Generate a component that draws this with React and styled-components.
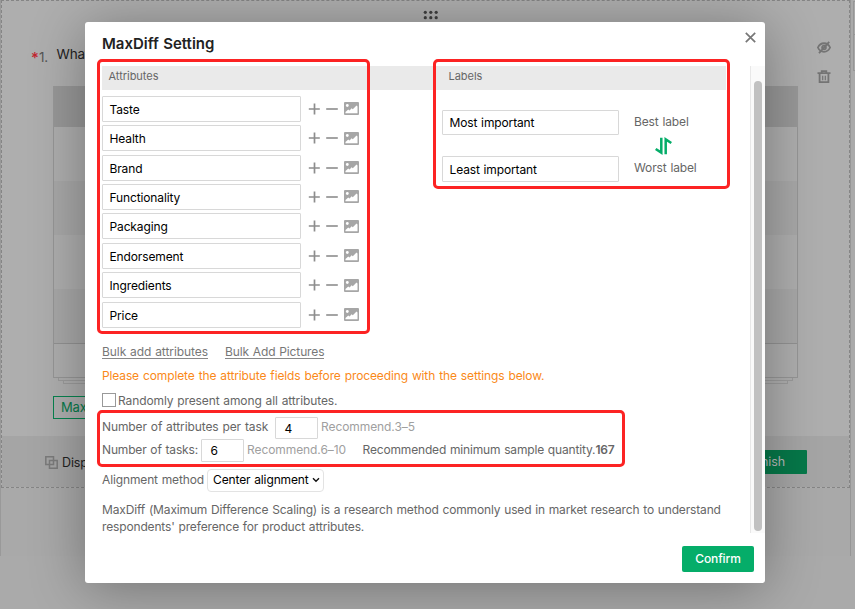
import React from 'react';
import styled, { createGlobalStyle } from 'styled-components';

const Global = createGlobalStyle`
  * { box-sizing: border-box; }
  body { margin: 0; background: #aaa; overflow: hidden; }
  svg { display: block; }
`;

const Page = styled.div`
  width: 855px;
  height: 609px;
  overflow: hidden;
  position: relative;
  background: #aaa;
  font-family: Inter, "Liberation Sans", sans-serif;
  font-size: 12px;
  letter-spacing: -0.13px;
  word-spacing: 0.6px;
  white-space: nowrap;
  color: #666;
`;
const Columns = styled.div`
  display: flex;
  height: 556px;
`;
const Editor = styled.div`
  width: 851px;
  border-left: 1px solid #999;
  border-right: 1px solid #969696;
  background: #a9a9a9;
`;
const SidePanel = styled.div`
  flex: 1;
  padding: 1px 0 0 2px;
`;
const SideTab = styled.div`
  height: ${(p) => p.$h}px;
  border: 1px solid #969696;
  border-right: 0;
  border-top-width: ${(p) => (p.$first ? 1 : 0)}px;
`;
const Question = styled.div`
  height: 488px;
  border: 1px dashed #858585;
  display: flex;
  flex-direction: column;
  background: #aeaeae;
`;
const Handle = styled.div`
  height: 50px;
  padding: 9px 0 0 421px;
`;
const Heading = styled.div`
  height: 35px;
  display: flex;
  align-items: flex-start;
  justify-content: space-between;
  margin-top: -12px;
  padding: 0 18px 0 29px;
`;
const QuestionTitle = styled.div`
  display: flex;
  font-size: 13.5px;
  line-height: 18px;
  padding-top: 6px;
  color: #222;
`;
const Star = styled.span`
  width: 8px;
  padding-top: 4px;
  color: #c3242f;
  font-size: 15px;
  font-weight: 500;
`;
const Num = styled.span`
  width: 17.5px;
  padding-top: 3px;
  color: #555;
`;
const Tools = styled.div`
  display: grid;
  gap: 16px;
  padding-top: 2px;
`;
const Table = styled.div`
  width: 745px;
  height: 292px;
  margin: 12px 0 0 51px;
  border: 1px solid #969696;
  border-top: 0;
`;
const TableRow = styled.div`
  height: ${(p) => p.$h}px;
  margin: ${(p) => (p.$head ? '0 -1px' : '0')};
  background: ${(p) => p.$bg};
  border-top: ${(p) => (p.$line ? '1px solid #929292' : '0')};
`;
const Sheet = styled.div`
  height: 3px;
  margin: 0 ${(p) => p.$inset}px 0 ${(p) => p.$inset}px;
  border: 1px solid #9b9b9b;
  border-top: 0;
`;
const Tag = styled.div`
  width: 90px;
  height: 23px;
  margin: 12px 0 0 51px;
  padding-left: 7px;
  border: 1px solid #07834f;
  line-height: 21px;
  font-size: 13px;
  color: #087a4b;
`;
const Footer = styled.div`
  margin-top: auto;
  height: 51px;
  background: #a5a5a5;
  display: flex;
  align-items: center;
  justify-content: space-between;
  padding: 1px 42px 0 43px;
`;
const Display = styled.div`
  display: flex;
  align-items: center;
  gap: 4px;
  font-size: 12.5px;
  color: #222;
`;
const Finish = styled.div`
  width: 76px;
  height: 24px;
  border-radius: 1px;
  line-height: 24px;
  padding-right: 22px;
  text-align: right;
  font-size: 12.5px;
  color: #b9b9b9;
  background: #067849;
`;

const Modal = styled.div`
  position: absolute;
  left: 85px;
  top: 22px;
  width: 680px;
  height: 561px;
  border-radius: 3px;
  background: #fff;
  box-shadow: 0 5px 55px rgba(0, 0, 0, 0.33);
`;
const ModalHead = styled.div`
  height: 44px;
  display: flex;
  justify-content: space-between;
  padding: 10px 9px 0 17px;
`;
const Title = styled.div`
  font-size: 15px;
  font-weight: 570;
  line-height: 24px;
  letter-spacing: 0;
  color: #222;
`;
const ModalBody = styled.div`
  height: 467px;
  display: flex;
  justify-content: space-between;
  padding-left: 17px;
`;
const Content = styled.div`
  width: 624px;
`;
const Track = styled.div`
  width: 15px;
  height: 467px;
  padding: 15px 3px 2px;
  background: #fafafa;
  border-left: 1px solid #e8e8e8;
`;
const Thumb = styled.div`
  height: 450px;
  width: 8px;
  border-radius: 4px;
  background: #c1c1c1;
`;
const Band = styled.div`
  height: 24px;
  background: #eaeaea;
  display: grid;
  grid-template-columns: 340px 1fr;
  padding-left: 6.5px;
  font-size: 11px;
  line-height: 21px;
  letter-spacing: -0.03px;
`;
const Panels = styled.div`
  display: grid;
  grid-template-columns: 340px 1fr;
  padding-top: 5.7px;
  height: 252px;
`;
const AttrRow = styled.div`
  height: 29.43px;
  display: flex;
  align-items: flex-start;
`;
const Field = styled.div`
  width: ${(p) => p.$w}px;
  height: ${(p) => p.$h || 26}px;
  line-height: ${(p) => (p.$h || 26) - 1}px;
  padding-left: ${(p) => p.$pad || 6.5}px;
  border: 1px solid #d8d8d8;
  border-radius: 1px;
  background: #fff;
  color: #000;
`;
const Actions = styled.div`
  display: flex;
  align-items: center;
  gap: 6px;
  height: 26px;
  padding-left: 7px;
`;
const LabelPanel = styled.div`
  padding-top: 14.3px;
`;
const LabelRow = styled.div`
  display: flex;
  gap: 15px;
  line-height: 23px;
`;
const SwapRow = styled.div`
  height: 21px;
  padding: 2px 0 0 213px;
`;
const Links = styled.div`
  display: flex;
  gap: 17px;
  height: 24px;
  line-height: 20px;
  color: #777;
`;
const LinkText = styled.span`
  height: 17px;
  border-bottom: 1px solid #888;
  letter-spacing: ${(p) => p.$ls}px;
`;
const Warning = styled.div`
  height: 24px;
  line-height: 20px;
  color: #fa8919;
  letter-spacing: -0.13px;
  word-spacing: 0.8px;
`;
const Line = styled.div`
  display: flex;
  align-items: center;
  height: ${(p) => p.$h}px;
  margin-bottom: ${(p) => p.$after || 0}px;
  letter-spacing: ${(p) => p.$ls ?? -0.13}px;
`;
const Box = styled.div`
  width: 14px;
  height: 14px;
  margin-right: 2px;
  border: 1px solid #999;
`;
const Caption = styled.span`
  width: ${(p) => (p.$w ? `${p.$w}px` : 'auto')};
  padding-bottom: 3px;
`;
const Hint = styled(Caption)`
  padding-left: 3px;
  color: #a0a0a0;
  letter-spacing: -0.08px;
`;
const Strong = styled.b`
  font-weight: 600;
`;
const Select = styled.div`
  display: flex;
  align-items: center;
  justify-content: space-between;
  width: 117px;
  height: 23px;
  padding: 0 3px 2px 5px;
  border: 1px solid #e3e3e3;
  border-radius: 4px;
  color: #000;
`;
const Note = styled.p`
  margin: 2px 0 0;
  line-height: 17px;
  letter-spacing: -0.15px;
`;
const ModalFoot = styled.div`
  display: flex;
  justify-content: flex-end;
  padding: 13px 11px 0 0;
`;
const Confirm = styled.div`
  width: 72px;
  height: 26px;
  border-radius: 2px;
  line-height: 26px;
  text-align: center;
  font-weight: 500;
  color: #fff;
  background: #05ad69;
`;
const Highlight = styled.div`
  position: absolute;
  left: ${(p) => p.$x}px;
  top: ${(p) => p.$y}px;
  width: ${(p) => p.$w}px;
  height: ${(p) => p.$h}px;
  border: 3px solid #fc2323;
  border-radius: 5px;
`;

const Plus = () => (
  <svg width="12" height="12" viewBox="0 0 12 12" stroke="#8d8d8d" strokeWidth="1.7"><path d="M.8 6h11M6.5 .5v11" /></svg>
);
const Minus = () => (
  <svg width="12" height="12" viewBox="0 0 12 12" stroke="#8d8d8d" strokeWidth="1.6"><path d="M.2 6h11.6" /></svg>
);
const Picture = () => (
  <svg width="15" height="13" viewBox="0 0 15 13">
    <rect width="15" height="13" rx="1" fill="#a6a6a6" />
    <circle cx="3.3" cy="3.5" r="1.4" fill="#fff" />
    <path d="M1.5 11.3V10L4.2 7.4 5.6 8.4 7.6 6.3 8.8 7.2 12.5 3.6 13.5 4.4V11.3Z" fill="#fff" />
  </svg>
);
const Swap = () => (
  <svg width="17" height="18" viewBox="0 0 17 18" fill="none" stroke="#05ad69" strokeWidth="2.5">
    <path d="M6.3.8V15.6L.7 12M10.7 17.2V2.4L16.3 6" />
  </svg>
);
const Dots = () => (
  <svg width="16" height="10" viewBox="0 0 16 10" fill="#3f3f3f">
    {[2.3, 7.8, 13.2].map((x) => [2.3, 7.7].map((y) => <circle key={`${x}-${y}`} cx={x} cy={y} r="1.6" />))}
  </svg>
);
const EyeOff = () => (
  <svg width="14" height="13" viewBox="0 0 14 13" fill="none" stroke="#747474" strokeWidth="1.8">
    <path d="M.9 6.5C3.5.8 10.5.8 13.1 6.5 10.5 12.2 3.5 12.2.9 6.5Z" />
    <circle cx="7" cy="6.5" r="1.9" />
    <path d="M12.2.8 2 12.2" />
  </svg>
);
const Trash = () => (
  <svg width="14" height="14" viewBox="0 0 14 14" fill="none" stroke="#747474" strokeWidth="1.8">
    <path d="M.5 3.2h13M4.7 3V1.1h4.6V3M2.6 3.5v8.7h8.8V3.5" />
    <path d="M5.7 5.8v4.4M8.3 5.8v4.4" strokeWidth="1.2" />
  </svg>
);
const Copy = () => (
  <svg width="13" height="13" viewBox="0 0 13 13" fill="none" stroke="#7b7b7b" strokeWidth="1.5">
    <path d="M.8.8h7.7v7.7H.8zM4.5 4.5h7.7v7.7H4.5z" />
  </svg>
);
const Close = () => (
  <svg width="11" height="11" viewBox="0 0 11 11" stroke="#777" strokeWidth="1.7"><path d="M.8.8 10.2 10.2M10.2.8.8 10.2" /></svg>
);
const Chevron = () => (
  <svg width="8" height="6" viewBox="0 0 8 6" fill="none" stroke="#111" strokeWidth="1.4"><path d="M1 1.3 4 4.3 7 1.3" /></svg>
);

const attributes = ['Taste', 'Health', 'Brand', 'Functionality', 'Packaging', 'Endorsement', 'Ingredients', 'Price'];

export default function App() {
  return (
    <Page>
      <Global />
      <Columns>
        <Editor>
          <Question>
            <Handle><Dots /></Handle>
            <Heading>
              <QuestionTitle><Star>*</Star><Num>1.</Num>What</QuestionTitle>
              <Tools><EyeOff /><Trash /></Tools>
            </Heading>
            <Table>
              <TableRow $h={41} $bg="#989898" $head />
              <TableRow $h={54} $bg="#aeaeae" />
              <TableRow $h={54} $bg="#a8a8a8" />
              <TableRow $h={54} $bg="#aeaeae" />
              <TableRow $h={54} $bg="#a8a8a8" />
              <TableRow $h={34} $bg="#aeaeae" $line />
            </Table>
            <Sheet $inset={56} />
            <Sheet $inset={61} />
            <Tag>MaxDiff</Tag>
            <Footer>
              <Display><Copy />Display</Display>
              <Finish>Finish</Finish>
            </Footer>
          </Question>
        </Editor>
        <SidePanel>
          <SideTab $h={34} $first />
          <SideTab $h={36} />
        </SidePanel>
      </Columns>

      <Modal>
        <ModalHead>
          <Title>MaxDiff Setting</Title>
          <Close />
        </ModalHead>
        <ModalBody>
          <Content>
            <Band><span>Attributes</span><span>Labels</span></Band>
            <Panels>
              <div>
                {attributes.map((name) => (
                  <AttrRow key={name}>
                    <Field $w={199}>{name}</Field>
                    <Actions><Plus /><Minus /><Picture /></Actions>
                  </AttrRow>
                ))}
              </div>
              <LabelPanel>
                <LabelRow><Field $w={177} $h={25}>Most important</Field>Best label</LabelRow>
                <SwapRow><Swap /></SwapRow>
                <LabelRow><Field $w={177}>Least important</Field>Worst label</LabelRow>
              </LabelPanel>
            </Panels>
            <Links>
              <LinkText $ls={-0.07}>Bulk add attributes</LinkText>
              <LinkText $ls={-0.12}>Bulk Add Pictures</LinkText>
            </Links>
            <Warning>Please complete the attribute fields before proceeding with the settings below.</Warning>
            <Line $h={20} $after={7} $ls={-0.11}><Box />Randomly present among all attributes.</Line>
            <Line $h={22} $ls={-0.1}>
              <Caption $w={173}>Number of attributes per task</Caption>
              <Field $w={43} $h={22} $pad={8.5}>4</Field>
              <Hint>Recommend.3–5</Hint>
            </Line>
            <Line $h={23} $ls={-0.16}>
              <Caption $w={99}>Number of tasks:</Caption>
              <Field $w={43} $h={23} $pad={8.5}>6</Field>
              <Hint $w={118.5}>Recommend.6–10</Hint>
              <Caption>Recommended minimum sample quantity.<Strong>167</Strong></Caption>
            </Line>
            <Line $h={37}>
              <Caption $w={105}>Alignment method</Caption>
              <Select>Center alignment<Chevron /></Select>
            </Line>
            <Note>
              MaxDiff (Maximum Difference Scaling) is a research method commonly used in market research to understand
              <br />
              respondents' preference for product attributes.
            </Note>
          </Content>
          <Track><Thumb /></Track>
        </ModalBody>
        <ModalFoot><Confirm>Confirm</Confirm></ModalFoot>
      </Modal>

      <Highlight $x={97} $y={59} $w={273} $h={275} />
      <Highlight $x={433} $y={59} $w={297} $h={130} />
      <Highlight $x={97} $y={410} $w={528} $h={57} />
    </Page>
  );
}
